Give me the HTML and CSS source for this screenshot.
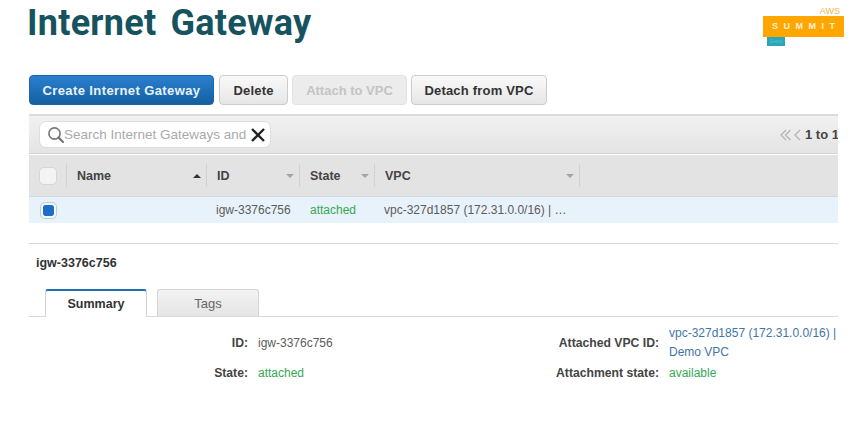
FILE: index.html
```html
<!DOCTYPE html>
<html lang="en">
<head>
    <meta charset="UTF-8">
    <meta name="viewport" content="width=device-width, initial-scale=1.0">
    <title>Internet Gateway</title>
    <link rel="stylesheet" href="styles.css">
</head>
<body>
    <header class="page-head">
        <h1>Internet Gateway</h1>
        <div class="logo">
            <span class="logo-aws">AWS</span>
            <span class="logo-bar">SUMMIT</span>
            <span class="logo-city">Seoul</span>
        </div>
    </header>

    <main class="console">
        <div class="actions">
            <button class="btn btn-primary">Create Internet Gateway</button>
            <button class="btn btn-delete">Delete</button>
            <button class="btn btn-disabled">Attach to VPC</button>
            <button class="btn btn-detach">Detach from VPC</button>
        </div>

        <div class="toolbar">
            <div class="search">
                <svg class="search-icon" width="18" height="18" viewBox="0 0 18 18">
                    <circle cx="7.5" cy="7.5" r="5.6" fill="none" stroke="#777" stroke-width="1.6"/>
                    <path d="M11.6 11.6L16 16" stroke="#777" stroke-width="2.2" stroke-linecap="round"/>
                </svg>
                <span class="search-text">Search Internet Gateways and</span>
                <svg class="search-clear" width="14" height="14" viewBox="0 0 14 14">
                    <path d="M1 1L13 13M13 1L1 13" stroke="#222" stroke-width="2.4"/>
                </svg>
            </div>
            <div class="pager">
                <svg width="22" height="12" viewBox="0 0 22 12">
                    <path d="M6 1L1 6L6 11M10.500 1L5.500 6L10.500 11M20 1L15 6L20 11" fill="none" stroke="#b5b5b5" stroke-width="1.300"/>
                </svg>
                <span>1 to 1</span>
            </div>
        </div>

        <div class="table-row table-head">
            <div class="cell cell-check"><span class="check"></span></div>
            <div class="cell cell-name">Name<span class="sort sort-up"></span></div>
            <div class="cell cell-id">ID<span class="sort"></span></div>
            <div class="cell cell-state">State<span class="sort"></span></div>
            <div class="cell cell-vpc">VPC<span class="sort"></span></div>
        </div>
        <div class="table-row table-body">
            <div class="cell cell-check"><span class="check check-on"></span></div>
            <div class="cell cell-name"></div>
            <div class="cell cell-id">igw-3376c756</div>
            <div class="cell cell-state green">attached</div>
            <div class="cell cell-vpc">vpc-327d1857 (172.31.0.0/16) | …</div>
        </div>

        <section class="detail">
            <h2>igw-3376c756</h2>
            <div class="tabs">
                <div class="tab tab-active">Summary</div>
                <div class="tab">Tags</div>
            </div>
            <div class="fields">
                <div class="label">ID:</div>
                <div class="value">igw-3376c756</div>
                <div class="label">Attached VPC ID:</div>
                <div class="value link">vpc-327d1857 (172.31.0.0/16) | Demo VPC</div>
                <div class="label">State:</div>
                <div class="value green">attached</div>
                <div class="label">Attachment state:</div>
                <div class="value green">available</div>
            </div>
        </section>
    </main>
</body>
</html>
```

FILE: styles.css
```css
body {
    margin: 0;
    background: #fff;
    color: #5c5c5c;
    font-family: "Liberation Sans", Arial, sans-serif;
    font-size: 12px;
    overflow: hidden;
}

.page-head {
    display: flex;
    justify-content: space-between;
    align-items: flex-start;
    height: 75px;
    padding: 0 16px 0 27px;
    box-sizing: border-box;
}

h1 {
    margin: 2px 0 0;
    color: #17535f;
    font-family: Roboto, sans-serif;
    font-size: 36px;
    font-weight: 700;
    line-height: normal;
    letter-spacing: 0.250px;
    word-spacing: 5px;
}

.logo {
    display: flex;
    flex-direction: column;
    width: 81px;
    margin-top: 6px;
}

.logo-aws {
    align-self: flex-end;
    margin-right: 4px;
    color: #eeb64a;
    font-size: 9px;
    line-height: 10px;
}

.logo-bar {
    height: 21px;
    padding-left: 9px;
    box-sizing: border-box;
    background: #ffa600;
    color: #fff3d0;
    font-size: 9px;
    font-weight: bold;
    letter-spacing: 5.500px;
    line-height: 21px;
}

.logo-city {
    width: 18px;
    height: 9px;
    margin-left: 4px;
    background: #2ba6bb;
    color: #5cc0d0;
    font-size: 5px;
    line-height: 9px;
    text-align: center;
}

.console {
    width: 809px;
    margin-left: 29px;
}

.actions {
    display: flex;
    gap: 4px;
    height: 39px;
}

.btn {
    height: 30px;
    padding: 0;
    border: 1px solid #ccc;
    border-radius: 4px;
    background: linear-gradient(#f9f9f9, #e6e6e6);
    color: #333;
    font-family: "Liberation Sans", Arial, sans-serif;
    font-size: 13px;
    font-weight: bold;
    letter-spacing: 0.200px;
}

.btn-primary {
    width: 185px;
    margin-right: 1px;
    border-color: #1a66a8;
    background: linear-gradient(#2b7fd0, #14609f);
    color: #e8f2fb;
    letter-spacing: 0.400px;
}

.btn-delete {
    width: 69px;
}

.btn-disabled {
    width: 115px;
    border-color: #e2e2e2;
    background: #ececec;
    color: #c4c4c4;
    letter-spacing: 0;
}

.btn-detach {
    width: 136px;
}

.toolbar {
    display: flex;
    justify-content: space-between;
    align-items: center;
    height: 40px;
    padding-left: 10px;
    box-sizing: border-box;
    border-top: 2px solid #dcdcdc;
    border-bottom: 1px solid #d4d4d4;
    background: linear-gradient(#f1f1f1, #e4e4e4);
}

.search {
    display: flex;
    align-items: center;
    width: 232px;
    height: 27px;
    padding-left: 7px;
    box-sizing: border-box;
    border: 1px solid #dedede;
    border-radius: 7px;
    background: #fff;
}

.search-icon {
    flex: none;
}

.search-text {
    flex: none;
    margin-left: -1px;
    color: #aaa;
    font-size: 13.500px;
    white-space: nowrap;
}

.search-clear {
    flex: none;
    margin-left: auto;
    margin-right: 5px;
}

.pager {
    display: flex;
    align-items: center;
    gap: 3px;
    width: 58px;
    overflow: hidden;
    color: #444;
    font-size: 13px;
    font-weight: bold;
    white-space: nowrap;
}

.pager svg {
    flex: none;
}

.table-row {
    display: flex;
    align-items: center;
}

.table-head {
    height: 41px;
    margin-top: 1px;
    border-bottom: 1px solid #d8d8d8;
    background: #e3e3e3;
    color: #444;
    font-weight: bold;
    font-size: 12.500px;
}

.table-body {
    height: 26px;
    background: #e8f2fb;
}

.cell {
    display: flex;
    align-items: center;
    justify-content: space-between;
    height: 23px;
    padding-left: 10px;
    box-sizing: border-box;
    white-space: nowrap;
}

.table-head .cell {
    padding-right: 5px;
    border-right: 1px solid #d2d2d2;
}

.table-body .cell-id,
.table-body .cell-vpc {
    padding-left: 9px;
}

.cell-check {
    width: 38px;
}

.cell-name {
    width: 140px;
}

.cell-id {
    width: 93px;
}

.cell-state {
    width: 75px;
}

.cell-vpc {
    width: 205px;
}

.check {
    display: block;
    width: 18px;
    height: 18px;
    box-sizing: border-box;
    border: 1px solid #d6d6d6;
    border-radius: 5px;
    background: #f3f3f3;
}

.check-on {
    width: 15px;
    height: 15px;
    margin-left: 2px;
    border: 2px solid #f4f8fb;
    border-radius: 4px;
    background: #1b6fc7;
    background-clip: padding-box;
    box-shadow: 0 0 0 1px #bccbda;
}

.sort {
    width: 0;
    height: 0;
    border: 4px solid transparent;
    border-top: 4px solid #a5a5a5;
    border-bottom: 0;
}

.sort-up {
    border-top: 0;
    border-bottom: 4px solid #333;
}

.green {
    color: #36a853;
}

.link {
    color: #3f76a8;
    line-height: 19px;
}

.detail {
    margin-top: 20px;
    border-top: 1px solid #d8d8d8;
}

h2 {
    margin: 0;
    padding: 12px 0 0 7px;
    color: #333;
    font-size: 12.500px;
    line-height: 14px;
}

.tabs {
    display: flex;
    gap: 10px;
    height: 27px;
    margin-top: 19px;
    padding-left: 16px;
    border-bottom: 1px solid #d8d8d8;
}

.tab {
    width: 102px;
    height: 27px;
    box-sizing: border-box;
    border: 1px solid #d4d4d4;
    border-bottom: 0;
    border-radius: 3px 3px 0 0;
    background: linear-gradient(#f3f3f3, #e4e4e4);
    color: #666;
    font-size: 13px;
    line-height: 27px;
    text-align: center;
}

.tab-active {
    height: 28px;
    border-top: 2px solid #1f6fb2;
    background: #fff;
    color: #333;
    font-size: 12.500px;
    font-weight: bold;
}

.fields {
    display: grid;
    grid-template-columns: 219px 190px 201px 169px;
    column-gap: 10px;
    row-gap: 4px;
    align-items: center;
    margin-top: 7px;
}

.label {
    color: #444;
    font-size: 12.200px;
    font-weight: bold;
    text-align: right;
}
```
